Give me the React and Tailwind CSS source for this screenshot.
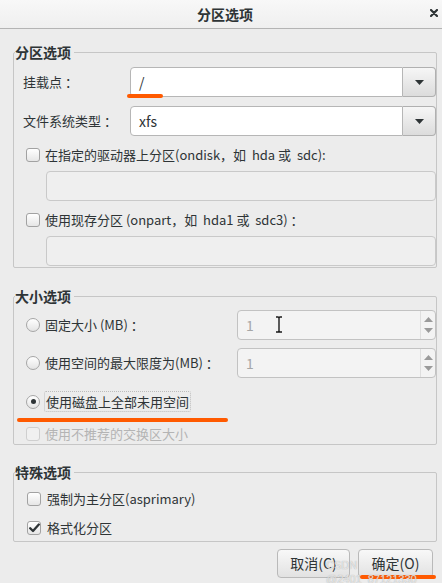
import React from "react";

const FONT = { fontFamily: '"Noto Sans CJK SC", "Noto Sans", sans-serif' };

function Arrow({ up }) {
  return (
    <svg width="9" height="5" viewBox="0 0 9 5" className="block">
      {up ? <path d="M0 5 L4.5 0 L9 5 Z" fill="#9a9a9a" /> : <path d="M0 0 L9 0 L4.5 5 Z" fill="#9a9a9a" />}
    </svg>
  );
}

function Combo({ value }) {
  return (
    <div className="flex h-[30px] flex-1">
      <div className="flex-1 flex items-center bg-white border border-[#b6b6b6] rounded-l-[4px] pl-[8px] text-[14px] text-[#2e3436]">
        {value}
      </div>
      <div className="w-[33px] flex items-center justify-center border border-l-0 border-[#b0b0b0] rounded-r-[4px] bg-gradient-to-b from-[#f6f6f6] to-[#dcdcdc]">
        <svg width="9" height="5" viewBox="0 0 9 5"><path d="M0 0 L9 0 L4.5 5 Z" fill="#2e3436" /></svg>
      </div>
    </div>
  );
}

function Spin({ cursor }) {
  return (
    <div className="relative flex h-[30px] w-[199px] border border-[#c2c2c2] rounded-[4px] bg-[#f3f3f3]">
      <div className="flex-1 flex items-center pl-[8px] text-[14px] text-[#a6a6a6]">1</div>
      <div className="w-[15px] flex flex-col items-center justify-around border-l border-[#dedede] py-[3px]">
        <Arrow up />
        <Arrow />
      </div>
      {cursor && (
        <svg className="absolute left-[37px] top-[5px]" width="8" height="17" viewBox="0 0 8 17">
          <path d="M1 1 H3 Q4 1 4 2.5 Q4 1 5 1 H7 M4 2.5 V14.5 M1 16 H3 Q4 16 4 14.5 Q4 16 5 16 H7" stroke="#1a1a1a" strokeWidth="1.4" fill="none" />
        </svg>
      )}
    </div>
  );
}

function Check({ checked, disabled }) {
  return (
    <div
      className={
        "w-[14px] h-[14px] rounded-[3px] border flex items-center justify-center shrink-0 " +
        (disabled ? "border-[#cfcfcf] bg-[#f0f0f0]" : "border-[#a2a2a2] bg-gradient-to-b from-[#ffffff] to-[#e6e6e6]")
      }
    >
      {checked && (
        <svg width="11" height="10" viewBox="0 0 11 10">
          <path d="M1.2 5.2 L4 8 L9.8 1.5" stroke="#2e3436" strokeWidth="2.3" fill="none" strokeLinecap="round" strokeLinejoin="round" />
        </svg>
      )}
    </div>
  );
}

function Radio({ checked }) {
  return (
    <div className="w-[14px] h-[14px] rounded-full border border-[#a6a6a6] bg-gradient-to-b from-[#ffffff] to-[#e4e4e4] flex items-center justify-center shrink-0">
      {checked && <div className="w-[5px] h-[5px] rounded-full bg-[#2e3436]" />}
    </div>
  );
}

function Disabled() {
  return <div className="h-[30px] border border-[#c9c9c9] rounded-[4px] bg-[#efefef] ml-[23px]" />;
}

export default function App() {
  return (
    <div style={FONT} className="relative w-[442px] h-[583px] overflow-hidden bg-[#ececec] text-[#2e3436] text-[13px]">
      {/* title bar */}
      <div className="relative h-[29px] flex items-center justify-center border-b border-[#b4b4b4] bg-gradient-to-b from-[#f8f8f8] to-[#efefef]">
        <span className="ml-[8px] font-bold text-[14px] text-[#2e3436]">分区选项</span>
        <svg className="absolute right-[4px] top-[9px]" width="8" height="8" viewBox="0 0 8 8">
          <path d="M1 1 L7 7 M7 1 L1 7" stroke="#2e3436" strokeWidth="2.2" strokeLinecap="round" />
        </svg>
      </div>

      <div className="pl-[13px] pr-[5px]">
        {/* Frame 1 */}
        <fieldset className="mt-[14px] border border-[#c6c6c6] rounded-[2px]">
          <legend className="ml-[1px] pr-[3px] font-bold text-[14px] leading-[18px]">分区选项</legend>
          <div className="pl-[9px] pt-[6px] pb-[1px] flex flex-col">
            <div className="flex items-center">
              <span className="w-[107px]">挂载点 ：</span>
              <Combo value="/" />
            </div>
            <div className="flex items-center mt-[9px]">
              <span className="w-[107px]">文件系统类型 ：</span>
              <Combo value="xfs" />
            </div>
            <div className="flex items-center h-[20px] mt-[9px] ml-[3px] gap-[5px]">
              <Check />
              <span>在指定的驱动器上分区(ondisk，如&nbsp; hda 或&nbsp; sdc):</span>
            </div>
            <div className="mt-[6px]"><Disabled /></div>
            <div className="flex items-center h-[20px] mt-[9px] ml-[3px] gap-[5px]">
              <Check />
              <span>使用现存分区 (onpart，如&nbsp; hda1 或&nbsp; sdc3) ：</span>
            </div>
            <div className="mt-[6px]"><Disabled /></div>
          </div>
        </fieldset>

        {/* Frame 2 */}
        <fieldset className="mt-[19px] border border-[#c6c6c6] rounded-[2px]">
          <legend className="ml-[1px] pr-[3px] font-bold text-[14px] leading-[18px]">大小选项</legend>
          <div className="pl-[9px] pt-[5px] flex flex-col">
            <div className="flex items-center justify-between">
              <div className="flex items-center gap-[5px] ml-[3px]">
                <Radio />
                <span>固定大小 (MB) ：</span>
              </div>
              <Spin cursor />
            </div>
            <div className="flex items-center justify-between mt-[8px]">
              <div className="flex items-center gap-[5px] ml-[3px]">
                <Radio />
                <span>使用空间的最大限度为(MB) ：</span>
              </div>
              <Spin />
            </div>
            <div className="flex items-center mt-[13px] ml-[3px] gap-[4px] h-[21px]">
              <Radio checked />
              <span className="h-[21px] flex items-center px-[1px] border border-dotted border-[#bdbdbd] rounded-[2px]">使用磁盘上全部未用空间</span>
            </div>
            <div className="flex items-center h-[20px] mt-[12px] ml-[3px] gap-[5px] text-[#b4b4b4]">
              <Check disabled />
              <span>使用不推荐的交换区大小</span>
            </div>
          </div>
        </fieldset>

        {/* Frame 3 */}
        <fieldset className="mt-[18px] border border-[#c6c6c6] rounded-[2px]">
          <legend className="ml-[1px] pr-[3px] font-bold text-[14px] leading-[18px]">特殊选项</legend>
          <div className="pl-[13px] pt-[8px] pb-[3px] flex flex-col">
            <div className="flex items-center h-[20px] gap-[6px]">
              <Check />
              <span>强制为主分区(asprimary)</span>
            </div>
            <div className="flex items-center h-[20px] mt-[9px] gap-[6px]">
              <Check checked />
              <span>格式化分区</span>
            </div>
          </div>
        </fieldset>

        {/* Buttons */}
        <div className="flex justify-end gap-[8px] mt-[7px] pr-[4px]">
          <button className="w-[73px] h-[29px] border border-[#b9b9b9] rounded-[4px] bg-gradient-to-b from-[#f8f8f8] to-[#e2e2e2] text-[14px] text-[#2e3436]">取消(C)</button>
          <button className="w-[75px] h-[29px] border border-[#b9b9b9] rounded-[4px] bg-gradient-to-b from-[#f8f8f8] to-[#e2e2e2] text-[14px] text-[#2e3436]">确定(O)</button>
        </div>
      </div>

      {/* annotations */}
      <div className="absolute left-[127px] top-[94px] w-[36px] h-[4px] rounded-full bg-[#ff5a00]" />
      <div className="absolute left-[17px] top-[418px] w-[211px] h-[4px] rounded-full bg-[#ff5a00]" />
      <div className="absolute left-[360px] top-[575px] w-[76px] h-[4px] rounded-full bg-[#ff5a00]" />
      <div className="absolute left-[326px] top-[558px] text-[11px] leading-[14px] text-white/70 [text-shadow:0_0_1px_#999]" style={{ fontFamily: '"Liberation Sans", sans-serif' }}>
        CSDN @2401_87121330
      </div>
    </div>
  );
}
